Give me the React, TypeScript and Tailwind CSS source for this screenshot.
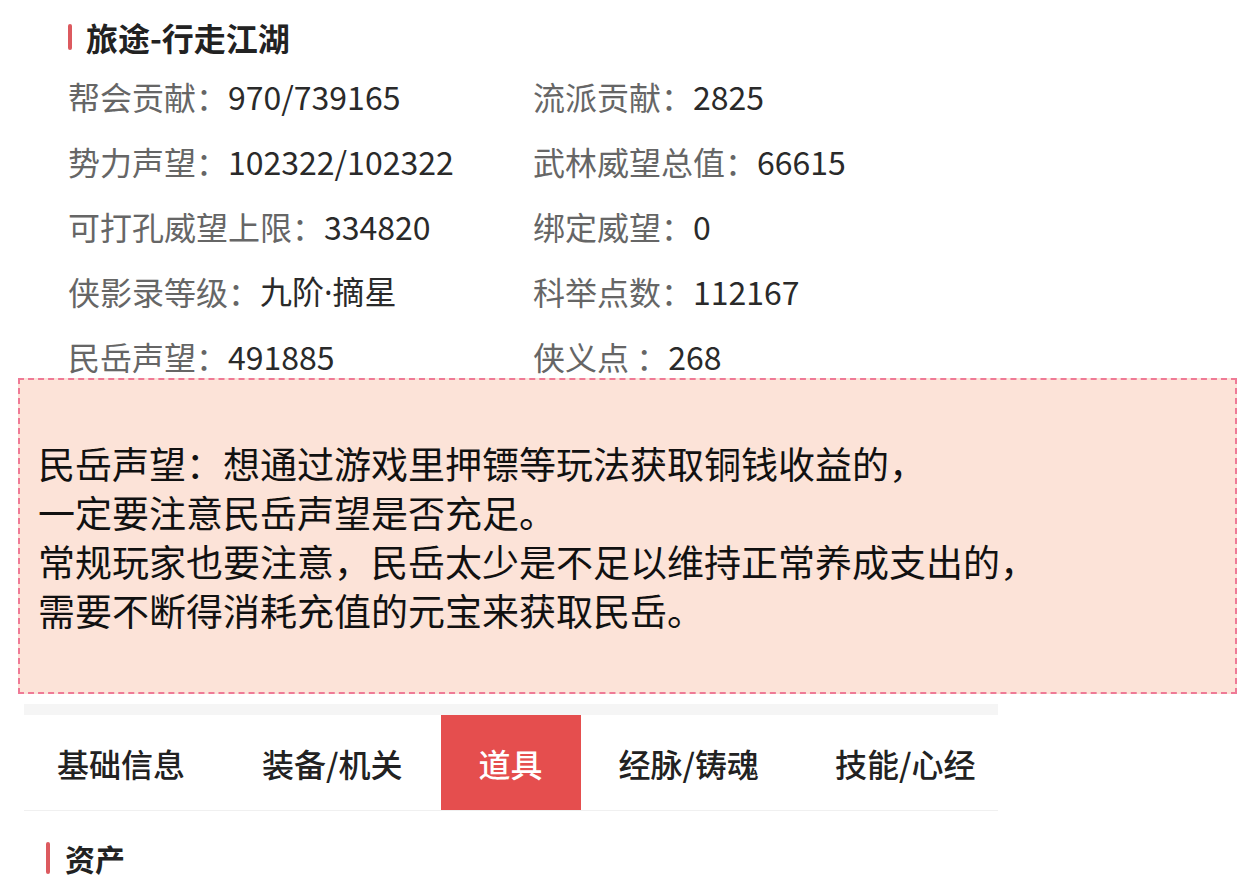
import React from "react"

const stats: [string, React.ReactNode][] = [
  ["帮会贡献：", "970/739165"],
  ["流派贡献：", "2825"],
  ["势力声望：", "102322/102322"],
  ["武林威望总值：", "66615"],
  ["可打孔威望上限：", "334820"],
  ["绑定威望：", "0"],
  ["侠影录等级：", <>九阶<span className="font-['Noto_Sans',sans-serif]">·</span>摘星</>],
  ["科举点数：", "112167"],
  ["民岳声望：", "491885"],
  ["侠义点 ：", "268"],
]

const tabs = ["基础信息", "装备/机关", "道具", "经脉/铸魂", "技能/心经"]

export default function App() {
  return (
    <div className="min-h-screen w-[1238px] overflow-hidden bg-white pt-[11px] font-['Noto_Sans_CJK_SC','Noto_Sans',sans-serif]">
      <div className="flex h-[52px] items-center pl-[68px]">
        <div className="h-[26px] w-[4px] rounded-full bg-[#dc5a5f]" />
        <h2 className="ml-[14px] text-[32px] font-bold text-[#222]">旅途-行走江湖</h2>
      </div>

      <div className="grid grid-cols-[465px_1fr] auto-rows-[65px] pl-[68px]">
        {stats.map(([k, v]) => (
          <div key={k} className="flex items-center text-[32px] leading-none">
            <span className="text-[#666]">{k}</span>
            <span className="text-[#2a2a2a]">{v}</span>
          </div>
        ))}
      </div>

      <div className="relative -mt-[10px] ml-[18px] mr-[1px] border-2 border-dashed border-[#ef7a96] bg-[#fce3d8] pb-[57px] pl-[18px] pt-[59px] text-[37px] leading-[49px] text-[#111]">
        <p>民岳声望：想通过游戏里押镖等玩法获取铜钱收益的，</p>
        <p>一定要注意民岳声望是否充足。</p>
        <p>常规玩家也要注意，民岳太少是不足以维持正常养成支出的，</p>
        <p>需要不断得消耗充值的元宝来获取民岳。</p>
      </div>

      <div className="ml-[24px] mt-[10px] w-[974px]">
        <div className="h-[11px] bg-[#f5f5f5]" />
        <div className="flex h-[96px] border-b border-[#f0f0f0]">
          {tabs.map((t, i) => (
            <div
              key={t}
              className={
                "flex shrink-0 items-center whitespace-nowrap text-[32px] font-medium " +
                (i === 0 ? "pl-[33px] pr-[39px] " : "px-[38px] ") +
                (t === "道具" ? "bg-[#e54e4e] text-white" : "text-[#222]")
              }
            >
              {t}
            </div>
          ))}
        </div>
      </div>

      <div className="flex h-[72px] items-center pl-[46px] pt-[22px]">
        <div className="h-[32px] w-[4px] rounded-full bg-[#dc5a5f]" />
        <h2 className="ml-[15px] text-[30px] font-bold text-[#222]">资产</h2>
      </div>
    </div>
  )
}
